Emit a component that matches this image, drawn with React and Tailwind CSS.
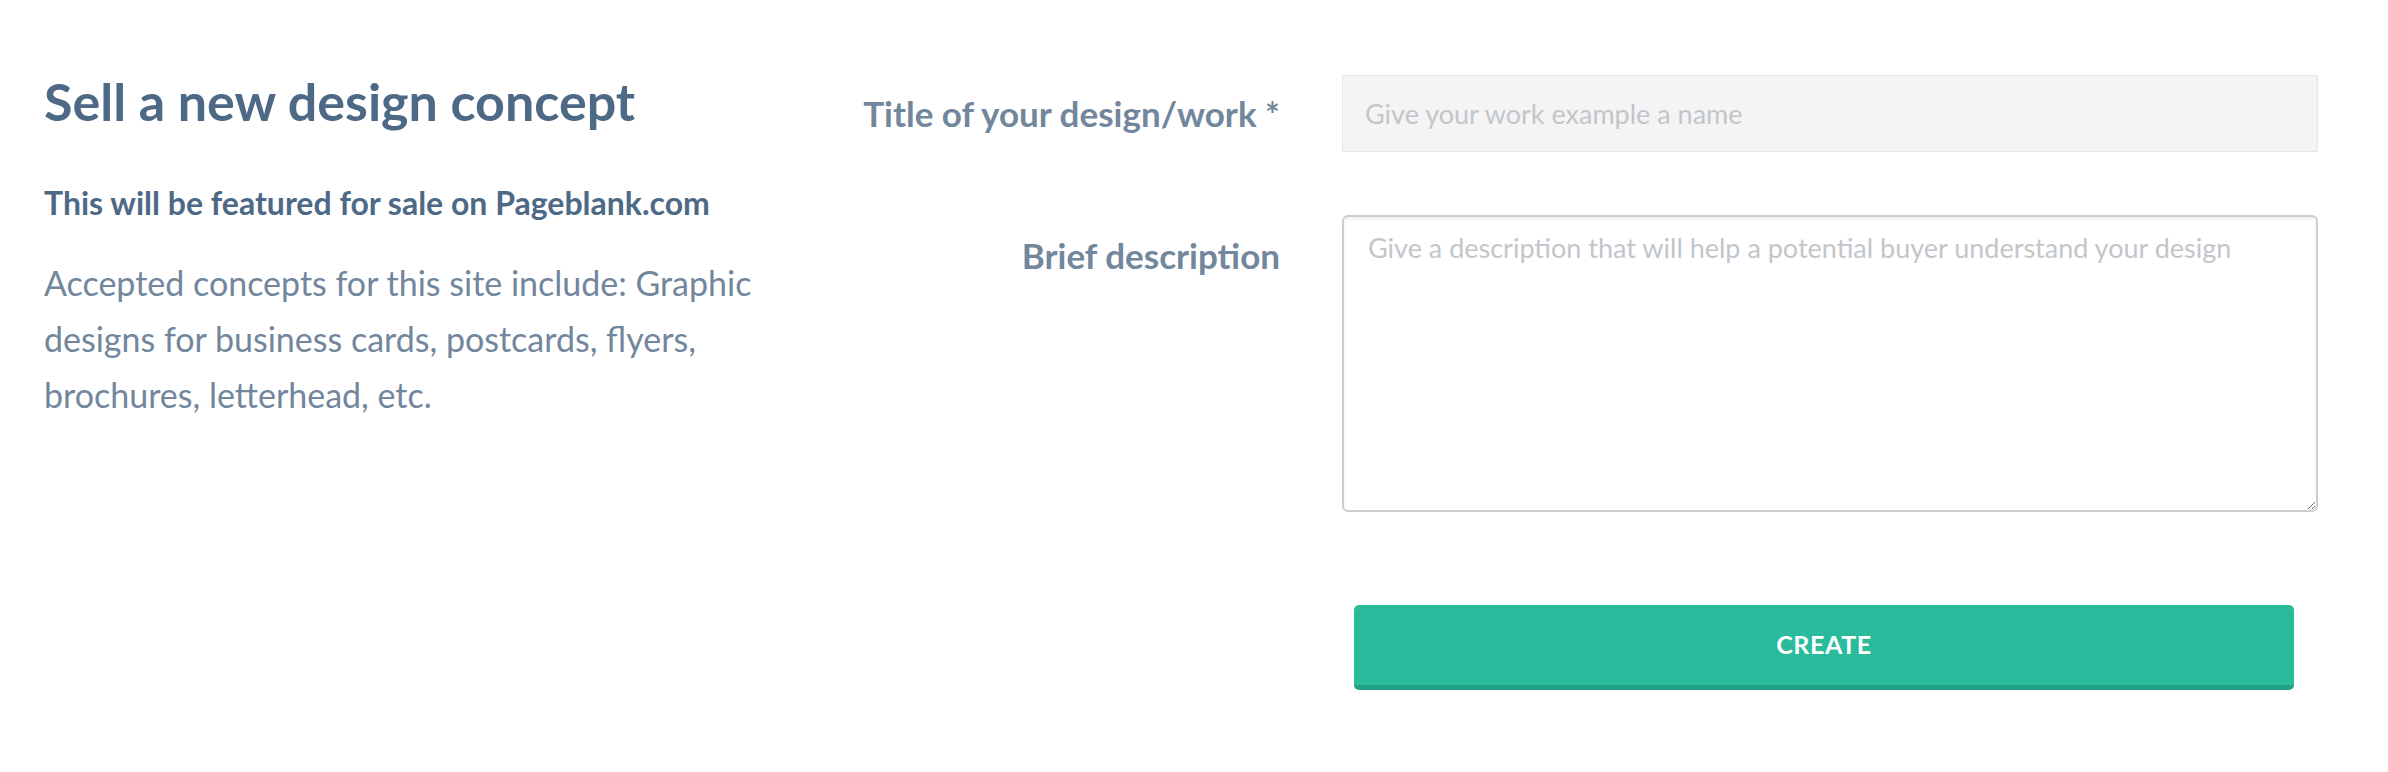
import React from "react";

export default function App() {
  return (
    <div className="min-h-screen bg-white font-['Lato',sans-serif]">
      <div className="flex px-[44px] pt-[70px]">
        {/* intro column */}
        <div className="w-[800px] shrink-0">
          <h1 className="text-[52px] font-bold leading-[1.2] text-[#4e6986]">
            Sell a new design concept
          </h1>
          <p className="mt-[52px] text-[32px] font-bold leading-[1.2] text-[#4e6986]">
            This will be featured for sale on Pageblank.com
          </p>
          <p className="mt-[32px] w-[780px] text-[34px] leading-[56px] text-[#72869c]">
            Accepted concepts for this site include: Graphic designs for
            business cards, postcards, flyers, brochures, letterhead, etc.
          </p>
        </div>

        {/* form */}
        <form className="grid grid-cols-[436px_976px] gap-x-[62px] pt-[5px]">
          <label className="flex items-center justify-end text-[35px] font-bold text-[#72869c]">
            Title of your design/work *
          </label>
          <input
            type="text"
            placeholder="Give your work example a name"
            className="h-[77px] w-full border border-[#e2e7ec] bg-[#f4f4f4] px-[22px] text-[27px] text-[#4e6986] outline-none placeholder:text-[#c2c6cb]"
          />

          <label className="mt-[63px] pt-[14px] text-right text-[35px] font-bold text-[#72869c]">
            Brief description
          </label>
          <textarea
            placeholder="Give a description that will help a potential buyer understand your design"
            className="mt-[63px] h-[297px] w-full rounded-[6px] border-2 border-[#cdcdcd] bg-white px-[24px] py-[11px] text-[27px] text-[#4e6986] shadow-[inset_0_2px_3px_rgba(0,0,0,0.06)] outline-none placeholder:text-[#c2c6cb]"
          />

          <div />
          <div className="mt-[93px] pl-[12px] pr-[24px]">
            <button
              type="button"
              className="h-[85px] w-full rounded-[5px] border-b-[5px] border-[#21a086] bg-[#29bb9c] text-[25px] font-bold tracking-wide text-white"
            >
              CREATE
            </button>
          </div>
        </form>
      </div>
    </div>
  );
}
